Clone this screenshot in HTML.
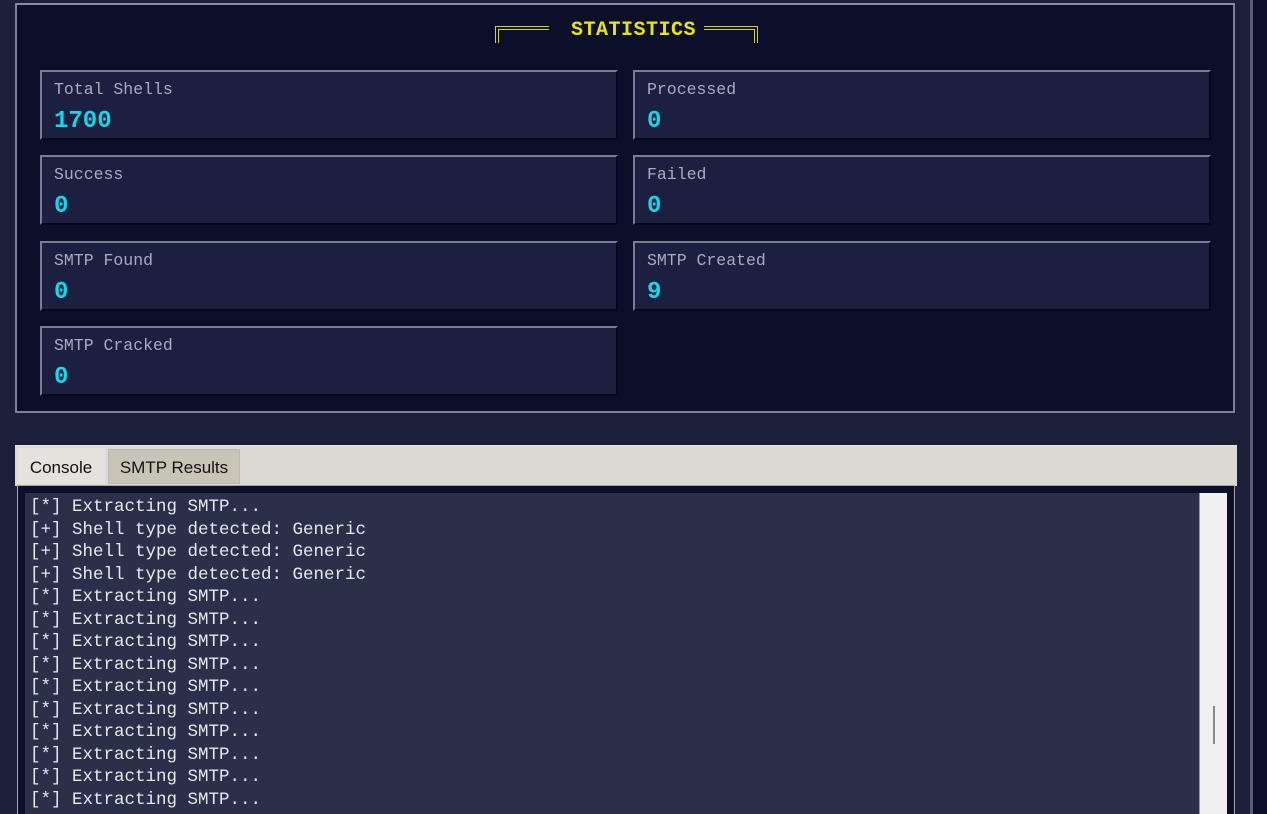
<!DOCTYPE html>
<html><head><meta charset="utf-8"><style>
html,body{margin:0;width:1267px;height:814px;overflow:hidden}
body{background:#1b1f3a;position:relative;font-family:"Liberation Mono",monospace}
.frame{position:absolute;left:15px;top:3px;width:1216px;height:406px;background:#0b0f2a;border:2px solid #7d8096;border-top-color:#8a8da0}
.title{position:absolute;left:0;right:0;top:19px;text-align:center;color:#e8e800;font-weight:bold;font-size:20px;letter-spacing:0.5px}
.br{position:absolute;top:26px;width:50px;height:13px;border-top:4px double #d8d800}
.bl{left:495px;border-left:4px double #d8d800}
.brr{left:704px;border-right:4px double #d8d800}
.card{position:absolute;width:574px;height:66px;background:#1b2040;border:2px solid #7a7d92;border-right-color:#05071a;border-bottom-color:#05071a}
.card .l{position:absolute;left:12px;top:8px;color:#a9acba;font-size:16.5px}
.card .v{position:absolute;left:12px;top:36px;color:#14d8ea;font-size:24px;font-weight:bold}
.tabs{position:absolute;left:15px;top:445px;width:1222px;height:40px;background:#dcdad5;border-top:1px solid #e8e6e0}
.t1{position:absolute;left:2px;top:2px;width:88px;height:36px;background:#e4e2dc;font-family:"Liberation Sans",sans-serif;font-size:17px;color:#111;line-height:40px;text-align:center}
.t2{position:absolute;left:93px;top:3px;width:130px;height:33px;background:#c8c4b8;border:1px solid #bcb8ab;font-family:"Liberation Sans",sans-serif;font-size:17px;color:#111;line-height:36px;text-align:center}
.con{position:absolute;left:17px;top:485px;width:1216px;height:340px;background:#0b0f2a;border:1px solid #a8a6a0}
.txt{position:absolute;left:25px;top:493px;width:1174px;height:330px;background:#2a2f4a;color:#e8e8ec;font-size:17.5px;line-height:22.5px;padding-left:5px;padding-top:3px;white-space:pre;box-sizing:border-box}
.sb{position:absolute;left:1199px;top:493px;width:27px;height:330px;background:#f0f0f0;border-left:1px solid #999}
.th{position:absolute;left:13px;top:213px;width:2px;height:38px;background:#888}
</style></head><body>
<div class="frame"></div>
<div class="br bl"></div><div class="br brr"></div>
<div class="title">STATISTICS</div>
<div class="card" style="left:40px;top:70px"><div class="l">Total Shells</div><div class="v">1700</div></div>
<div class="card" style="left:633px;top:70px"><div class="l">Processed</div><div class="v">0</div></div>
<div class="card" style="left:40px;top:155px"><div class="l">Success</div><div class="v">0</div></div>
<div class="card" style="left:633px;top:155px"><div class="l">Failed</div><div class="v">0</div></div>
<div class="card" style="left:40px;top:241px"><div class="l">SMTP Found</div><div class="v">0</div></div>
<div class="card" style="left:633px;top:241px"><div class="l">SMTP Created</div><div class="v">9</div></div>
<div class="card" style="left:40px;top:326px"><div class="l">SMTP Cracked</div><div class="v">0</div></div>
<div style="position:absolute;left:1250px;top:0;width:3px;height:814px;background:#5a5d70"></div>
<div style="position:absolute;left:1253px;top:0;width:14px;height:814px;background:#0b0f2a"></div>
<div class="tabs"><div class="t1">Console</div><div class="t2">SMTP Results</div></div>
<div class="con"></div>
<div class="txt">[*] Extracting SMTP...
[+] Shell type detected: Generic
[+] Shell type detected: Generic
[+] Shell type detected: Generic
[*] Extracting SMTP...
[*] Extracting SMTP...
[*] Extracting SMTP...
[*] Extracting SMTP...
[*] Extracting SMTP...
[*] Extracting SMTP...
[*] Extracting SMTP...
[*] Extracting SMTP...
[*] Extracting SMTP...
[*] Extracting SMTP...</div>
<div class="sb"><div class="th"></div></div>
</body></html>
